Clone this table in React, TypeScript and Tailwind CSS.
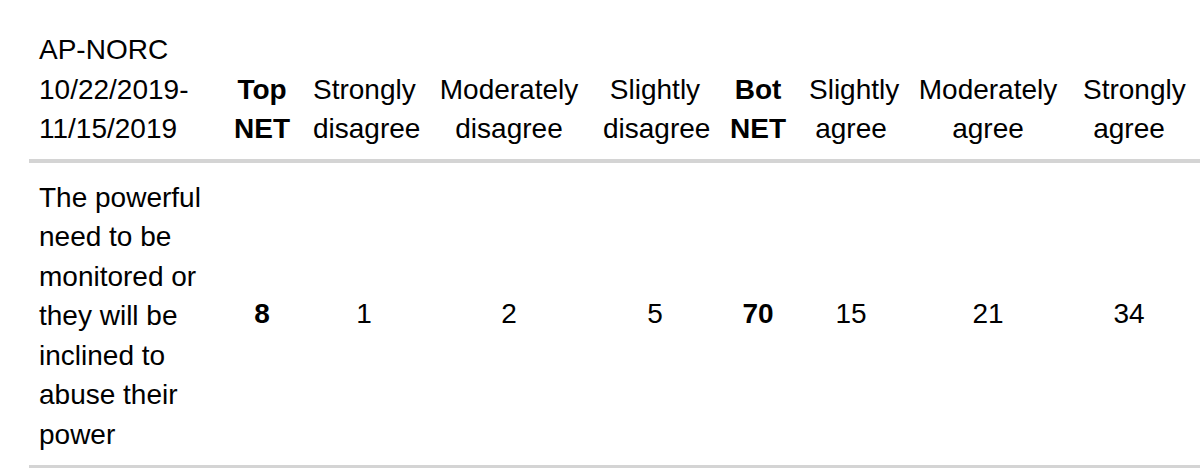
import React from 'react';

const headers: { lines: [string, string]; bold?: boolean }[] = [
  { lines: ['Top', 'NET'], bold: true },
  { lines: ['Strongly', 'disagree'] },
  { lines: ['Moderately', 'disagree'] },
  { lines: ['Slightly', 'disagree'] },
  { lines: ['Bot', 'NET'], bold: true },
  { lines: ['Slightly', 'agree'] },
  { lines: ['Moderately', 'agree'] },
  { lines: ['Strongly', 'agree'] },
];

const values: { v: string; bold?: boolean }[] = [
  { v: '8', bold: true },
  { v: '1' },
  { v: '2' },
  { v: '5' },
  { v: '70', bold: true },
  { v: '15' },
  { v: '21' },
  { v: '34' },
];

const colWidths = ['w-[192px]', 'w-[82px]', 'w-[122px]', 'w-[168px]', 'w-[124px]', 'w-[82px]', 'w-[104px]', 'w-[170px]', 'w-[127px]'];

const App: React.FC = () => {
  return (
    <div className="w-[1200px] h-[471px] overflow-hidden bg-white pt-[20px] text-black font-['Liberation_Sans',Arial,sans-serif] text-[28px] leading-[39.5px]">
      <table className="ml-[29px] w-[1171px] table-fixed border-collapse">
        <colgroup>
          {colWidths.map((w, i) => (
            <col key={i} className={w} />
          ))}
        </colgroup>
        <thead>
          <tr className="border-b-4 border-[#d4d4d4]">
            <th className="px-[10px] pt-[10px] pb-[10px] text-left font-normal align-bottom">
              AP-NORC
              <br />
              10/22/2019-
              <br />
              11/15/2019
            </th>
            {headers.map((h, i) => (
              <th
                key={i}
                className={`pt-[10px] pb-[10px] pl-[10px] text-center align-bottom whitespace-nowrap ${
                  h.bold ? 'font-bold' : 'font-normal'
                } ${i === headers.length - 1 ? 'pr-[25px]' : 'pr-[10px]'}`}
              >
                {h.lines[0]}
                <br />
                {h.lines[1]}
              </th>
            ))}
          </tr>
        </thead>
        <tbody>
          <tr className="border-b-[3px] border-[#d4d4d4]">
            <td className="px-[10px] pt-[15px] pb-[11px] text-left align-top">
              The powerful
              <br />
              need to be
              <br />
              monitored or
              <br />
              they will be
              <br />
              inclined to
              <br />
              abuse their
              <br />
              power
            </td>
            {values.map((c, i) => (
              <td
                key={i}
                className={`pl-[10px] text-center align-middle ${c.bold ? 'font-bold' : ''} ${
                  i === values.length - 1 ? 'pr-[25px]' : 'pr-[10px]'
                }`}
              >
                {c.v}
              </td>
            ))}
          </tr>
        </tbody>
      </table>
    </div>
  );
};

export default App;
